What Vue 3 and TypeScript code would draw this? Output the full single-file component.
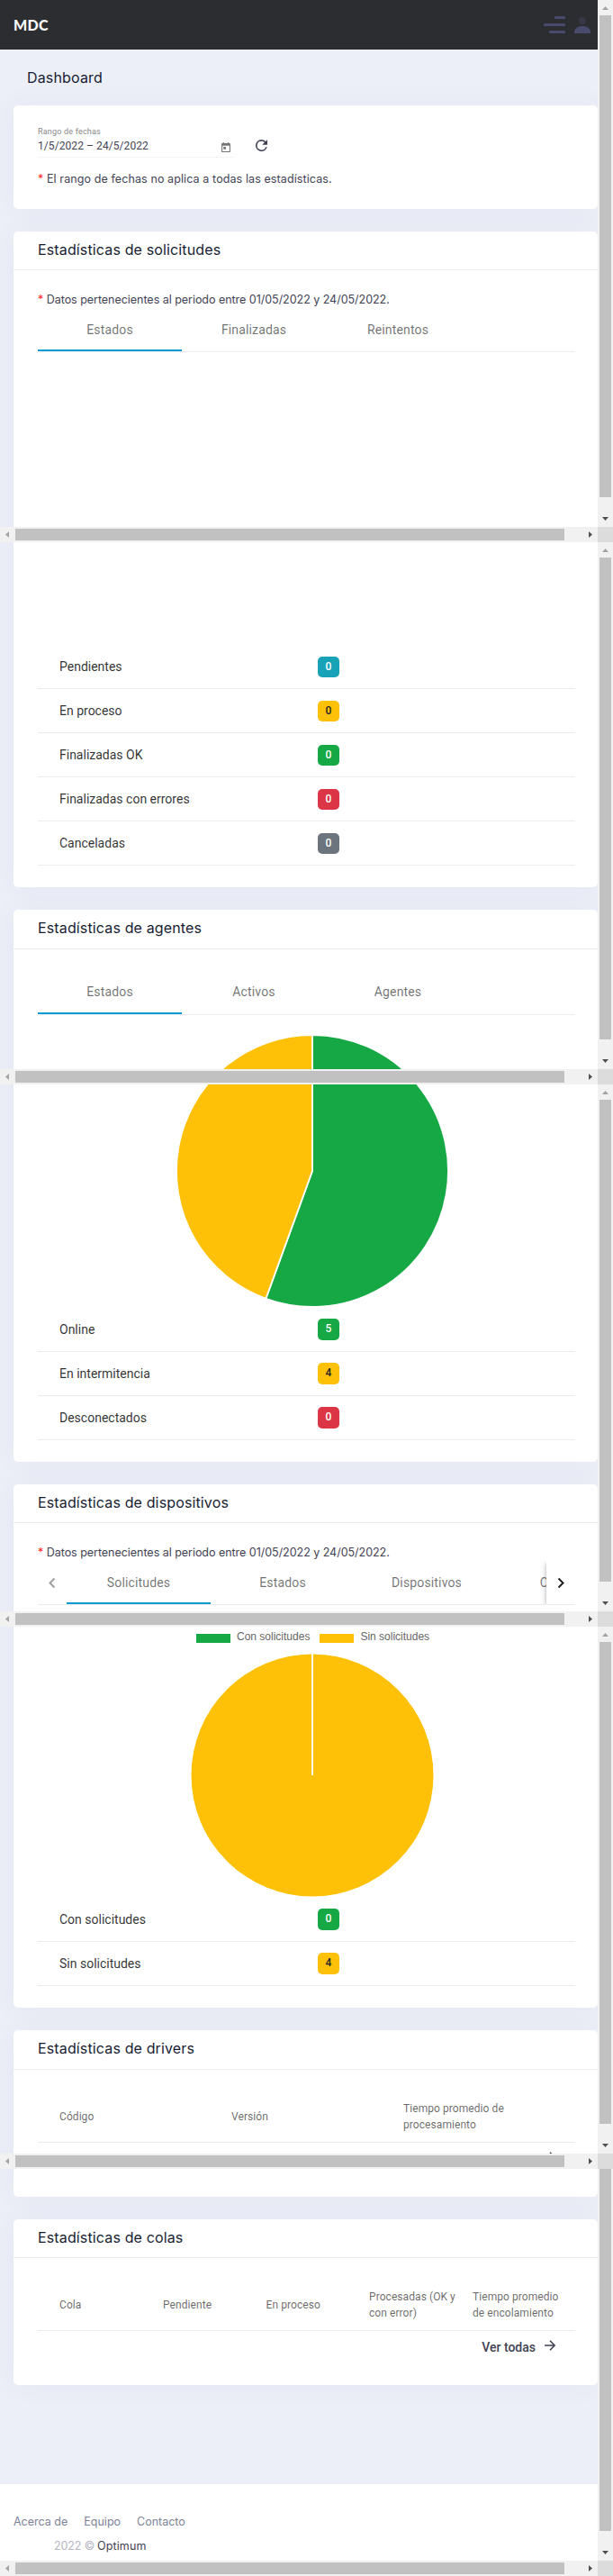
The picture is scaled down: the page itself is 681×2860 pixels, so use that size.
<script setup lang="ts">
interface Row { label: string; value: number; tone: string }
interface Bar { top: number; thumbTop: number; thumbEnd: number; end: number; first: boolean }

const requestRows: Row[] = [
  { label: 'Pendientes', value: 0, tone: 'info' },
  { label: 'En proceso', value: 0, tone: 'warning' },
  { label: 'Finalizadas OK', value: 0, tone: 'success' },
  { label: 'Finalizadas con errores', value: 0, tone: 'danger' },
  { label: 'Canceladas', value: 0, tone: 'secondary' },
]
const agentRows: Row[] = [
  { label: 'Online', value: 5, tone: 'success' },
  { label: 'En intermitencia', value: 4, tone: 'warning' },
  { label: 'Desconectados', value: 0, tone: 'danger' },
]
const deviceRows: Row[] = [
  { label: 'Con solicitudes', value: 0, tone: 'success' },
  { label: 'Sin solicitudes', value: 4, tone: 'warning' },
]
const frames: Bar[] = [
  { top: 0, thumbTop: 17, thumbEnd: 552, end: 602, first: true },
  { top: 602, thumbTop: 17, thumbEnd: 552, end: 1204, first: true },
  { top: 1204, thumbTop: 17, thumbEnd: 552, end: 1806, first: true },
  { top: 1806, thumbTop: 17, thumbEnd: 552, end: 2408, first: true },
  { top: 2408, thumbTop: 0, thumbEnd: 402, end: 2860, first: false },
]
const period = 'Datos pertenecientes al periodo entre 01/05/2022 y 24/05/2022.'
</script>

<template>
  <div class="page">
    <header class="topbar">
      <span class="brand">MDC</span>
      <div class="actions">
        <svg class="menu" width="24" height="20" viewBox="0 0 24 20">
          <rect x="12" y="0" width="12" height="3" rx="1" />
          <rect x="0" y="8" width="24" height="3" rx="1" />
          <rect x="6" y="16" width="18" height="3" rx="1" />
        </svg>
        <svg class="user" width="18" height="18" viewBox="0 0 18 18">
          <circle cx="9" cy="4" r="4" opacity=".35" />
          <path d="M0 18v-1C0 12.500 4 10 9 10s9 2.500 9 7v1z" />
        </svg>
      </div>
    </header>

    <h1 class="page-title">Dashboard</h1>

    <section class="card filter">
      <div class="filter-row">
        <div class="field">
          <div class="field-label">Rango de fechas</div>
          <div class="field-value">
            <span>1/5/2022 – 24/5/2022</span>
            <svg width="10" height="11" viewBox="0 0 18 20" fill="#757575">
              <path d="M16 2h-1V0h-2v2H5V0H3v2H2C.9 2 0 2.900 0 4v14c0 1.100.9 2 2 2h14c1.100 0 2-.9 2-2V4c0-1.100-.9-2-2-2zm0 16H2V7h14zM4 9h5v5H4z" />
            </svg>
          </div>
        </div>
        <svg class="refresh" width="13" height="13" viewBox="0 0 16 16" fill="#3f4254">
          <path d="M13.650 2.350A7.960 7.960 0 0 0 8 0a8 8 0 1 0 7.730 10h-2.080A6 6 0 1 1 8 2c1.660 0 3.140.69 4.220 1.780L9 7h7V0z" />
        </svg>
      </div>
      <p class="note n1"><i>*</i> El rango de fechas no aplica a todas las estadísticas.</p>
    </section>

    <section class="card requests">
      <h2>Estadísticas de solicitudes</h2>
      <p class="note n2"><i>*</i> {{ period }}</p>
      <div class="tabs">
        <div class="tab active">Estados</div><div class="tab">Finalizadas</div><div class="tab">Reintentos</div>
      </div>
      <div class="empty-chart"></div>
      <div v-for="r in requestRows" :key="r.label" class="row">
        <span>{{ r.label }}</span><b class="badge short" :class="r.tone">{{ r.value }}</b>
      </div>
    </section>

    <section class="card agents">
      <h2 class="tall">Estadísticas de agentes</h2>
      <div class="tabs spaced">
        <div class="tab active">Estados</div><div class="tab">Activos</div><div class="tab">Agentes</div>
      </div>
      <svg class="pie agents-pie" width="302" height="302" viewBox="-151 -151 302 302" stroke="#fff" stroke-width="1.800">
        <path fill="#16a844" d="M0 0V-151A151 151 0 1 1 -51.640 141.900Z" />
        <path fill="#fec107" d="M0 0L-51.640 141.900A151 151 0 0 1 0 -151Z" />
      </svg>
      <div v-for="r in agentRows" :key="r.label" class="row">
        <span>{{ r.label }}</span><b class="badge" :class="r.tone">{{ r.value }}</b>
      </div>
    </section>

    <section class="card devices">
      <h2>Estadísticas de dispositivos</h2>
      <p class="note n2"><i>*</i> {{ period }}</p>
      <div class="tabs paged">
        <div class="pager">
          <svg width="8" height="13" viewBox="0 0 8 13"><path d="M6.500 1.500l-5 5 5 5" fill="none" stroke="#a0a0a0" stroke-width="2" /></svg>
        </div>
        <div class="tab-window">
          <div class="tab active">Solicitudes</div><div class="tab">Estados</div><div class="tab">Dispositivos</div><div class="tab">Consumos</div>
        </div>
        <div class="pager next">
          <svg width="8" height="13" viewBox="0 0 8 13"><path d="M1.500 1.500l5 5-5 5" fill="none" stroke="#212121" stroke-width="2" /></svg>
        </div>
      </div>
      <div class="legend">
        <i class="success"></i><span>Con solicitudes</span><i class="warning"></i><span>Sin solicitudes</span>
      </div>
      <svg class="pie" width="270" height="270" viewBox="-135 -135 270 270">
        <circle r="134.500" fill="#fec107" />
        <path d="M0 0V-135" stroke="#fff" stroke-width="1.800" />
      </svg>
      <div v-for="r in deviceRows" :key="r.label" class="row">
        <span>{{ r.label }}</span><b class="badge" :class="r.tone">{{ r.value }}</b>
      </div>
    </section>

    <section class="card drivers">
      <h2 class="tall">Estadísticas de drivers</h2>
      <div class="thead three">
        <span>Código</span><span>Versión</span><span>Tiempo promedio de<br>procesamiento</span>
      </div>
      <div class="more">
        <span>Ver todos</span>
        <svg width="12" height="12" viewBox="0 0 12 12"><path d="M0 6h11M6 .8L11.200 6 6 11.200" fill="none" stroke="#3f4254" stroke-width="1.600" /></svg>
      </div>
    </section>

    <section class="card queues">
      <h2>Estadísticas de colas</h2>
      <div class="thead five">
        <span>Cola</span><span>Pendiente</span><span>En proceso</span><span>Procesadas (OK y<br>con error)</span><span>Tiempo promedio<br>de encolamiento</span>
      </div>
      <div class="more">
        <span>Ver todas</span>
        <svg width="12" height="12" viewBox="0 0 12 12"><path d="M0 6h11M6 .8L11.200 6 6 11.200" fill="none" stroke="#3f4254" stroke-width="1.600" /></svg>
      </div>
    </section>

    <footer class="footer">
      <nav><span>Acerca de</span><span>Equipo</span><span>Contacto</span></nav>
      <div class="copy"><span>2022 ©</span><b>Optimum</b></div>
    </footer>

    <div class="scroll-layer">
      <div v-for="f in frames" :key="f.top" class="frame" :style="{ height: f.end - f.top + 'px' }">
        <div class="vbar">
          <svg v-if="f.first" width="17" height="17"><path d="M5 11l3.500-4 3.500 4z" fill="#a3a3a3" /></svg>
          <div class="vthumb" :style="{ height: f.thumbEnd - f.thumbTop + 'px' }"></div>
          <svg class="down" width="17" height="17"><path d="M5 6h7l-3.500 4z" fill="#505050" /></svg>
        </div>
        <div class="hbar">
          <svg width="17" height="17"><path d="M10 5v7L6 8.500z" fill="#a3a3a3" /></svg>
          <div class="hthumb"></div>
          <svg class="right" width="17" height="17"><path d="M7 5v7l4-3.500z" fill="#505050" /></svg>
          <div class="corner"></div>
        </div>
      </div>
    </div>
  </div>
</template>

<style>
body { margin: 0; }
</style>

<style scoped>
* { box-sizing: border-box; }
.page { position: relative; width: 681px; height: 2860px; overflow: hidden; background: #eceff8; font-family: Roboto, sans-serif; color: #3f4254; display: flex; flex-direction: column; }
.topbar { height: 55px; flex: none; background: #2c2d31; display: flex; justify-content: space-between; align-items: center; padding: 0 25px 0 15px; }
.brand { color: #fff; font: 900 16px/20px Lato, sans-serif; letter-spacing: .3px; }
.actions { display: flex; align-items: center; gap: 10px; fill: #494b6c; }
.page-title { margin: 0; height: 62px; flex: none; padding: 20px 0 0 30px; font: 400 16px/22px Inter, sans-serif; letter-spacing: .15px; color: #181c32; }
.card { flex: none; width: 649px; margin: 0 0 25px 15px; padding: 0 25px 0 27px; background: #fff; border-radius: 5px; box-shadow: 0 0 30px rgba(82, 63, 105, .05); }
.filter { height: 115px; padding-top: 23px; }
.filter-row { display: flex; align-items: flex-start; }
.field { width: 218px; height: 35px; border-bottom: 1px solid #f3f3f5; }
.field-label { font-size: 9px; line-height: 12px; color: #888; letter-spacing: .2px; }
.field-value { display: flex; justify-content: space-between; align-items: center; padding-right: 4px; font-size: 12px; line-height: 20px; letter-spacing: .08px; }
.field-value svg { margin-top: 2px; }
.refresh { margin: 15px 0 0 24px; }
.note { margin: 0; font: 400 12.5px/18px Inter, sans-serif; letter-spacing: -.03px; color: #3f4254; white-space: nowrap; }
.note i { color: #ff2222; font-style: normal; }
.n1 { margin-top: 15px; letter-spacing: .1px; }
.n2 { margin-top: 24px; }
.requests { height: 728px; }
h2 { margin: 0 -25px 0 -27px; padding: 8px 0 0 27px; height: 43px; border-bottom: 1px solid #ebedf3; font: 400 16px/24px Inter, sans-serif; letter-spacing: .14px; color: #181c32; }
h2.tall { height: 44px; }
.tabs { display: flex; height: 49px; border-bottom: 1px solid #ebedf3; }
.tab { width: 160px; flex: none; height: 48px; line-height: 49px; text-align: center; font-size: 14px; font-weight: 400; letter-spacing: .15px; color: rgba(0, 0, 0, .56); border-bottom: 2px solid transparent; }
.tab.active { border-color: #0a9bd2; }
.tabs.spaced { margin-top: 24px; }
.tabs.spaced .tab { line-height: 47px; }
.empty-chart { height: 325px; }
.row { display: grid; grid-template-columns: 287px 1fr; align-items: center; height: 49px; padding-left: 24px; border-bottom: 1px solid #ebedf3; font-size: 14px; color: rgba(0, 0, 0, .82); }
.badge { width: 24px; height: 24px; border-radius: 5px; font-size: 12px; line-height: 22px; text-align: center; color: #fff; font-weight: 500; }
.badge.short { height: 23px; }
.info { background: #17a2b8; }
.warning { background: #fec107; }
.badge.warning { color: #212529; }
.success { background: #16a844; }
.danger { background: #dc3545; }
.secondary { background: #6c757d; }
.agents { height: 613px; }
.pie { display: block; margin: 0 157px 1px auto; }
.agents-pie { margin-top: 22px; margin-right: 141px; }
.devices { height: 581px; }
.paged { overflow: hidden; }
.pager { width: 32px; flex: none; display: flex; align-items: center; justify-content: center; }
.pager.next { background: #fff; box-shadow: 0 2px 4px -1px rgba(0,0,0,.2), 0 4px 5px rgba(0,0,0,.14), 0 1px 10px rgba(0,0,0,.12); }
.tab-window { flex: 1; display: flex; overflow: hidden; }
.legend { display: flex; align-items: center; height: 20px; margin: 25px 0 9px 176px; font: 12px/20px "Liberation Sans", Arial, sans-serif; color: #666; }
.legend i { width: 38px; height: 10px; margin-right: 7px; margin-top: 3px; }
.legend span { margin-right: 11px; white-space: nowrap; }
.drivers { height: 185px; }
.thead { display: grid; align-items: center; padding-left: 24px; font-size: 12px; line-height: 18px; font-weight: 400; letter-spacing: .07px; color: rgba(0, 0, 0, .6); border-bottom: 1px solid #ebedf3; height: 57px; margin-top: 24px; white-space: nowrap; }
.three { grid-template-columns: 191px 191px 1fr; }
.five { grid-template-columns: 115px 114.500px 114.500px 115px 1fr; }
.more { display: flex; justify-content: flex-end; align-items: center; gap: 10px; padding-right: 22px; height: 35px; font-size: 14px; font-weight: 500; }
.more svg { margin-top: -4px; }
.queues { height: 184px; margin-bottom: 110px; }
.footer { flex: 1; background: #fff; padding: 28px 0 0 15px; font: 400 12.5px/27px Inter, sans-serif; }
.footer nav { display: flex; gap: 18px; color: #7e8299; }
.copy { padding-left: 45px; display: flex; gap: 3px; color: #b5b5c3; letter-spacing: -.1px; }
.copy b { font-weight: 400; color: #3f4254; letter-spacing: .1px; }
.scroll-layer { position: absolute; inset: 0; display: flex; flex-direction: column; }
.frame { display: flex; flex-direction: column; align-items: flex-end; flex: none; }
.vbar { flex: 1; width: 17px; background: #f1f1f1; display: flex; flex-direction: column; align-items: center; }
.vthumb { width: 13px; background: #c1c1c1; }
.down { margin-top: auto; }
svg { display: block; flex: none; }
.hbar { width: 681px; height: 17px; flex: none; display: flex; align-items: center; background: #f1f1f1; }
.hthumb { width: 610px; height: 13px; background: #c1c1c1; }
.right { margin-left: auto; }
.corner { width: 17px; height: 17px; background: #dcdcdc; }
</style>
